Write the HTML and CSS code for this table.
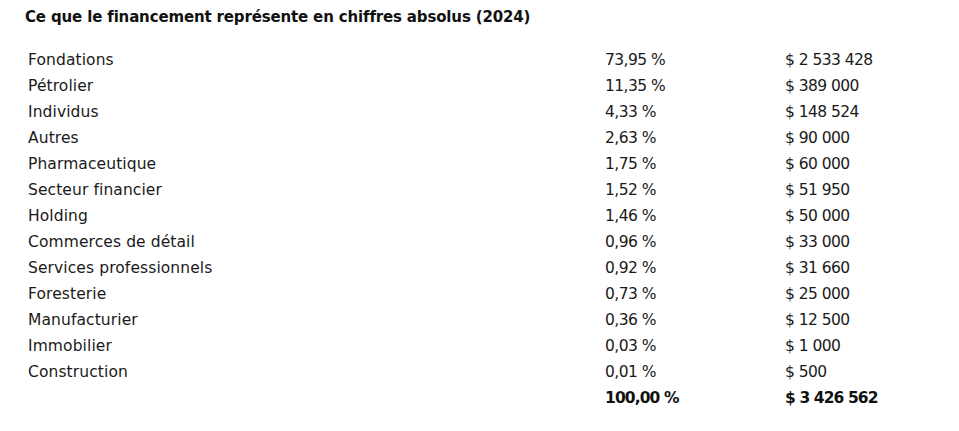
FILE: index.html
```html
<!DOCTYPE html>
<html lang="fr">
<head>
<meta charset="utf-8">
<link rel="stylesheet" href="styles.css">
</head>
<body>
<div class="wrap">
  <h2 class="title">Ce que le financement représente en chiffres absolus (2024)</h2>
  <div class="table">
    <div class="row"><span>Fondations</span><span class="num">73,95 %</span><span class="num">$ 2 533 428</span></div>
    <div class="row"><span>Pétrolier</span><span class="num">11,35 %</span><span class="num">$ 389 000</span></div>
    <div class="row"><span>Individus</span><span class="num">4,33 %</span><span class="num">$ 148 524</span></div>
    <div class="row"><span>Autres</span><span class="num">2,63 %</span><span class="num">$ 90 000</span></div>
    <div class="row"><span>Pharmaceutique</span><span class="num">1,75 %</span><span class="num">$ 60 000</span></div>
    <div class="row"><span>Secteur financier</span><span class="num">1,52 %</span><span class="num">$ 51 950</span></div>
    <div class="row"><span>Holding</span><span class="num">1,46 %</span><span class="num">$ 50 000</span></div>
    <div class="row"><span>Commerces de détail</span><span class="num">0,96 %</span><span class="num">$ 33 000</span></div>
    <div class="row"><span>Services professionnels</span><span class="num">0,92 %</span><span class="num">$ 31 660</span></div>
    <div class="row"><span>Foresterie</span><span class="num">0,73 %</span><span class="num">$ 25 000</span></div>
    <div class="row"><span>Manufacturier</span><span class="num">0,36 %</span><span class="num">$ 12 500</span></div>
    <div class="row"><span>Immobilier</span><span class="num">0,03 %</span><span class="num">$ 1 000</span></div>
    <div class="row"><span>Construction</span><span class="num">0,01 %</span><span class="num">$ 500</span></div>
    <div class="row total"><span></span><span class="num">100,00 %</span><span class="num">$ 3 426 562</span></div>
  </div>
</div>
</body>
</html>
```
FILE: styles.css
```css
html, body {
  margin: 0;
  padding: 0;
  background: #ffffff;
}
body {
  font-family: "DejaVu Sans", sans-serif;
  color: #111111;
}
.wrap {
  padding: 7px 0 0 25px;
}
.title {
  margin: 0;
  font-size: 15px;
  font-weight: bold;
  line-height: 20px;
  letter-spacing: -0.15px;
}
.table {
  margin-top: 20px;
  padding-left: 3px;
}
.row {
  display: grid;
  grid-template-columns: 577px 180px 1fr;
  height: 26px;
  align-items: center;
  font-size: 15.5px;
  letter-spacing: 0.1px;
  color: #1a1a1a;
}
.num {
  letter-spacing: -0.55px;
}
.total {
  font-weight: bold;
  color: #111111;
}
.total .num {
  letter-spacing: -0.9px;
}
```
